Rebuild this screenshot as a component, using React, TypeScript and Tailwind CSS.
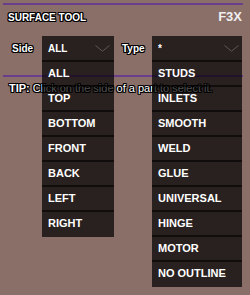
import React from "react";

const outline =
  "[text-shadow:1px_1px_0_#000,-1px_-1px_0_#000,1px_-1px_0_#000,-1px_1px_0_#000,0_1px_0_#000,0_-1px_0_#000,1px_0_0_#000,-1px_0_0_#000]";

function Chevron() {
  return (
    <svg width="15" height="7" viewBox="0 0 15 7" className="shrink-0">
      <polyline points="0.5,0.5 7.5,6.2 14.5,0.5" fill="none" stroke="#5f5653" strokeWidth="1" />
    </svg>
  );
}

function Dropdown({ value, items, width, pr }: { value: string; items: string[]; width: string; pr: string }) {
  return (
    <div className={`relative h-[24px] ${width}`}>
      <div className={`h-full bg-black/70 flex items-center justify-between pl-[6px] ${pr} text-[10px] font-bold text-white`}>
        <span>{value}</span>
        <Chevron />
      </div>
      <div className="absolute left-0 top-full w-full z-10 bg-black/70 pb-[2px]">
        {items.map((it) => (
          <div
            key={it}
            className="h-[25px] border-t-2 border-black/60 flex items-center pl-[6px] text-[11px] font-bold text-white"
          >
            {it}
          </div>
        ))}
      </div>
    </div>
  );
}

export default function App() {
  return (
    <div className="w-[250px] h-[295px] bg-[#8a6e68] overflow-hidden font-['Liberation_Sans',Arial,sans-serif] select-none">
      <div className="pt-[3px] px-[3px]">
        <div className="h-[2px] w-[240px] bg-[#6b3e8c]" />
      </div>
      <div className="h-[24px] flex items-center justify-between pl-[8px] pr-[8px]">
        <span className={`text-[10px] font-bold text-white ${outline}`}>SURFACE TOOL</span>
        <span className="text-[13px] font-bold text-[#efefef]">F3X</span>
      </div>
      <div className="relative mt-[7px] flex items-center pl-[12px]">
        <span className={`w-[30px] text-[10px] font-bold text-white ${outline}`}>Side</span>
        <Dropdown
          value="ALL"
          width="w-[72px]"
          pr="pr-[4px]"
          items={["ALL", "TOP", "BOTTOM", "FRONT", "BACK", "LEFT", "RIGHT"]}
        />
        <span className={`ml-[8px] w-[30px] text-[10px] font-bold text-white ${outline}`}>Type</span>
        <Dropdown
          value="*"
          width="w-[90px]"
          pr="pr-[3px]"
          items={["STUDS", "INLETS", "SMOOTH", "WELD", "GLUE", "UNIVERSAL", "HINGE", "MOTOR", "NO OUTLINE"]}
        />
      </div>
      <div className="mt-[15px] px-[3px]">
        <div className="h-[2px] w-[240px] bg-[#6b3e8c]" />
      </div>
      <div className={`mt-[4px] pl-[9px] text-[11px] leading-[14px] text-white whitespace-nowrap ${outline}`}>
        <span className="font-bold">TIP:</span> Click on the side of a part to select it.
      </div>
    </div>
  );
}
